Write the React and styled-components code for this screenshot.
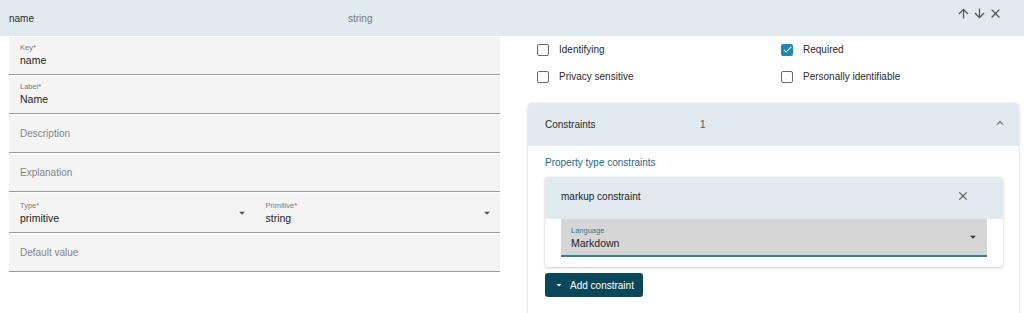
import React from 'react'
import styled, { createGlobalStyle } from 'styled-components'

const GlobalStyle = createGlobalStyle`
  html, body {
    margin: 0;
    padding: 0;
    background: #fff;
    overflow: hidden;
  }
  body {
    font-family: "Liberation Sans", Arial, Helvetica, sans-serif;
    color: #2b2b2b;
    -webkit-font-smoothing: antialiased;
  }
`

const Icon = ({ d, size = 14, color = '#555' }) => (
  <svg width={size} height={size} viewBox="0 0 24 24" fill={color} aria-hidden="true">
    <path d={d} />
  </svg>
)

const paths = {
  up: 'M4 12l1.41 1.41L11 7.83V20h2V7.83l5.58 5.59L20 12l-8-8-8 8z',
  down: 'M20 12l-1.41-1.41L13 16.17V4h-2v12.17l-5.58-5.59L4 12l8 8 8-8z',
  close:
    'M19 6.41L17.59 5 12 10.59 6.41 5 5 6.41 10.59 12 5 17.59 6.41 19 12 13.41 17.59 19 19 17.59 13.41 12z',
  less: 'M12 8l-6 6 1.41 1.41L12 10.83l4.59 4.58L18 14z',
  drop: 'M7 10l5 5 5-5z',
  check: 'M9 16.17L4.83 12l-1.42 1.41L9 19 21 7l-1.41-1.41z',
}

const Header = styled.div`
  display: flex;
  align-items: center;
  height: 36px;
  padding: 0 21px 0 9px;
  background: #e0eaef;
  font-size: 10px;
`

const HeaderName = styled.div`
  width: 339px;
  color: #2b2b2b;
`

const HeaderType = styled.div`
  color: #777;
`

const HeaderActions = styled.div`
  display: flex;
  align-items: center;
  gap: 1px;
  margin-left: auto;
  margin-top: -9px;

  svg {
    display: block;
  }
`

const Body = styled.div`
  display: grid;
  grid-template-columns: 491px 491px;
  column-gap: 28px;
  padding: 1px 4px 0 9px;
`

const LeftCol = styled.div`
  display: flex;
  flex-direction: column;
  gap: 1px;
`

const Field = styled.div`
  position: relative;
  box-sizing: border-box;
  height: ${p => p.$height || 38}px;
  padding: ${p => (p.$empty ? '0 11px' : `${p.$top || 6}px 11px 0`)};
  display: flex;
  flex-direction: column;
  justify-content: ${p => (p.$empty ? 'center' : 'flex-start')};
  background: #f4f4f4;
  border-bottom: 1px solid #9b9b9b;
`

const FieldLabel = styled.div`
  font-size: 7.5px;
  line-height: 9px;
  color: #7a7a7a;
`

const FieldValue = styled.div`
  margin-top: 2px;
  font-size: 10.5px;
  line-height: 13px;
  color: #222;
`

const Placeholder = styled.div`
  font-size: 10px;
  color: #858585;
`

const FieldRow = styled.div`
  display: grid;
  grid-template-columns: 1fr 1fr;
`

const DropArrow = styled.span`
  position: absolute;
  right: ${p => p.$right || 8}px;
  top: 50%;
  transform: translateY(-50%);
  display: flex;
`

const RightCol = styled.div`
  display: flex;
  flex-direction: column;
`

const CheckGrid = styled.div`
  display: grid;
  grid-template-columns: 244px 244px;
  grid-auto-rows: 27px;
  margin-top: -1px;
  padding-left: 9px;
`

const CheckItem = styled.label`
  display: flex;
  align-items: center;
  gap: 10px;
  font-size: 10px;
  color: #2b2b2b;
`

const Box = styled.span`
  box-sizing: border-box;
  width: 12px;
  height: 12px;
  border-radius: 2px;
  display: flex;
  align-items: center;
  justify-content: center;
  border: ${p => (p.$checked ? 'none' : '1.5px solid #6a6a6a')};
  background: ${p => (p.$checked ? '#1f8ab0' : '#fff')};
`

const Panel = styled.div`
  margin-top: 13px;
  border-radius: 4px;
  background: #fff;
  box-shadow: 0 1px 3px rgba(0, 0, 0, 0.18), 0 0 1px rgba(0, 0, 0, 0.12);
  overflow: hidden;
  padding-bottom: 30px;
`

const PanelHeader = styled.div`
  display: flex;
  align-items: center;
  height: 43px;
  padding: 0 12px 0 17px;
  background: #e0eaef;
  font-size: 10px;
  color: #2b2b2b;
`

const PanelTitle = styled.div`
  width: 155px;
`

const PanelCount = styled.div`
  color: #555;
`

const PanelToggle = styled.span`
  margin-left: auto;
  display: flex;
  margin-top: -3px;
`

const PanelBody = styled.div`
  padding: 11px 16px 0 17px;
`

const SectionTitle = styled.div`
  font-size: 10px;
  line-height: 12px;
  color: #1c6a85;
`

const Card = styled.div`
  margin-top: 8px;
  border-radius: 3px;
  background: #fff;
  box-shadow: 0 1px 3px rgba(0, 0, 0, 0.2), 0 0 1px rgba(0, 0, 0, 0.12);
  padding-bottom: 10px;
  overflow: hidden;
`

const CardHeader = styled.div`
  box-sizing: border-box;
  display: flex;
  align-items: center;
  height: 42px;
  padding: 0 33px 4px 16px;
  background: #e0eaef;
  font-size: 10px;
  color: #222;

  svg {
    margin-left: auto;
    display: block;
  }
`

const SelectBox = styled.div`
  position: relative;
  box-sizing: border-box;
  height: 38px;
  margin: 0 16px;
  padding: 7px 10px 0;
  background: #d6d6d6;
  border-bottom: 2px solid #3f7b90;
`

const SelectLabel = styled(FieldLabel)`
  color: #2f7a94;
`

const AddButton = styled.button`
  display: flex;
  align-items: center;
  gap: 5px;
  margin-top: 6px;
  height: 24px;
  width: 98px;
  padding: 0 0 0 8px;
  border: none;
  border-radius: 3px;
  background: #0b475b;
  color: #fff;
  font-family: inherit;
  font-size: 10px;
  cursor: pointer;

  svg {
    display: block;
  }
`

const TextField = ({ label, value, placeholder }) =>
  placeholder ? (
    <Field $empty>
      <Placeholder>{placeholder}</Placeholder>
    </Field>
  ) : (
    <Field>
      <FieldLabel>{label}</FieldLabel>
      <FieldValue>{value}</FieldValue>
    </Field>
  )

const SelectField = ({ label, value }) => (
  <Field $height={40} $top={8}>
    <FieldLabel>{label}</FieldLabel>
    <FieldValue>{value}</FieldValue>
    <DropArrow $right={6}>
      <Icon d={paths.drop} size={14} color="#555" />
    </DropArrow>
  </Field>
)

const Check = ({ label, checked }) => (
  <CheckItem>
    <Box $checked={checked}>{checked && <Icon d={paths.check} size={11} color="#fff" />}</Box>
    {label}
  </CheckItem>
)

export default function App() {
  return (
    <>
      <GlobalStyle />
      <Header>
        <HeaderName>name</HeaderName>
        <HeaderType>string</HeaderType>
        <HeaderActions>
          <Icon d={paths.up} size={15} />
          <Icon d={paths.down} size={15} />
          <Icon d={paths.close} size={15} />
        </HeaderActions>
      </Header>
      <Body>
        <LeftCol>
          <TextField label="Key*" value="name" />
          <TextField label="Label*" value="Name" />
          <TextField placeholder="Description" />
          <TextField placeholder="Explanation" />
          <FieldRow>
            <SelectField label="Type*" value="primitive" />
            <SelectField label="Primitive*" value="string" />
          </FieldRow>
          <TextField placeholder="Default value" />
        </LeftCol>
        <RightCol>
          <CheckGrid>
            <Check label="Identifying" />
            <Check label="Required" checked />
            <Check label="Privacy sensitive" />
            <Check label="Personally identifiable" />
          </CheckGrid>
          <Panel>
            <PanelHeader>
              <PanelTitle>Constraints</PanelTitle>
              <PanelCount>1</PanelCount>
              <PanelToggle>
                <Icon d={paths.less} size={14} color="#666" />
              </PanelToggle>
            </PanelHeader>
            <PanelBody>
              <SectionTitle>Property type constraints</SectionTitle>
              <Card>
                <CardHeader>
                  markup constraint
                  <Icon d={paths.close} size={14} color="#555" />
                </CardHeader>
                <SelectBox>
                  <SelectLabel>Language</SelectLabel>
                  <FieldValue>Markdown</FieldValue>
                  <DropArrow $right={7}>
                    <Icon d={paths.drop} size={14} color="#333" />
                  </DropArrow>
                </SelectBox>
              </Card>
              <AddButton>
                <Icon d={paths.drop} size={12} color="#fff" />
                Add constraint
              </AddButton>
            </PanelBody>
          </Panel>
        </RightCol>
      </Body>
    </>
  )
}
